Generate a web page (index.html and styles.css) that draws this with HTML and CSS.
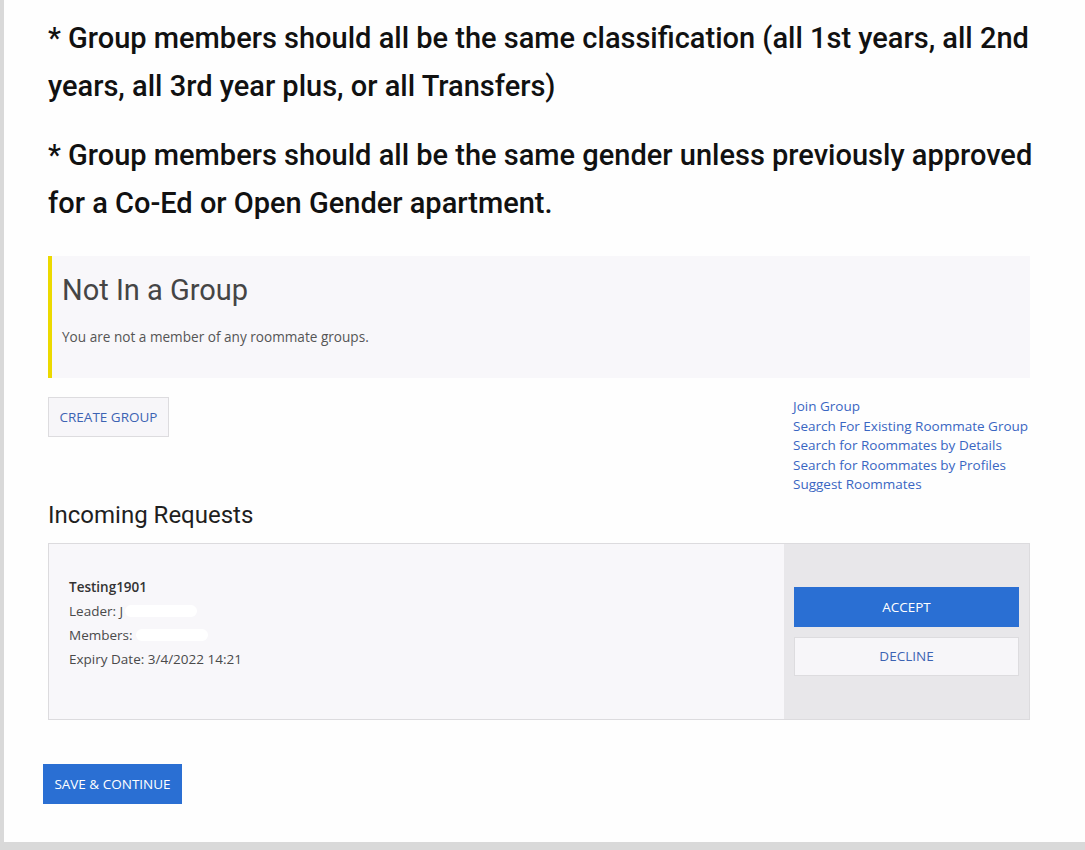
FILE: index.html
```html
<!DOCTYPE html>
<html>
<head>
<meta charset="utf-8">
<link rel="stylesheet" href="styles.css">
</head>
<body>
<div class="panel">
  <p class="note">* Group members should all be the same classification (all 1st years, all 2nd years, all 3rd year plus, or all Transfers)</p>
  <p class="note second">* Group members should all be the same gender unless previously approved for a Co-Ed or Open Gender apartment.</p>

  <div class="status">
    <h2 class="status-title">Not In a Group</h2>
    <p class="status-text">You are not a member of any roommate groups.</p>
  </div>

  <div class="actions">
    <button class="btn btn-light create">CREATE GROUP</button>
    <ul class="links">
      <li><a href="#">Join Group</a></li>
      <li><a href="#">Search For Existing Roommate Group</a></li>
      <li><a href="#">Search for Roommates by Details</a></li>
      <li><a href="#">Search for Roommates by Profiles</a></li>
      <li><a href="#">Suggest Roommates</a></li>
    </ul>
  </div>

  <h3 class="section-title">Incoming Requests</h3>

  <div class="request">
    <div class="request-info">
      <div class="req-name">Testing1901</div>
      <div class="req-line">Leader: J<span class="redact r1"></span></div>
      <div class="req-line">Members: <span class="redact r2"></span></div>
      <div class="req-line">Expiry Date: 3/4/2022 14:21</div>
    </div>
    <div class="request-actions">
      <button class="btn btn-primary">ACCEPT</button>
      <button class="btn btn-light">DECLINE</button>
    </div>
  </div>

  <button class="btn btn-primary save">SAVE &amp; CONTINUE</button>
</div>
</body>
</html>
```

FILE: styles.css
```css
html, body {
  margin: 0;
  padding: 0;
}
body {
  background: #d9d9d9;
  width: 1085px;
  height: 850px;
  overflow: hidden;
}
.panel {
  margin-left: 4px;
  width: 1025px;
  height: 842px;
  background: #fefefe;
  padding: 0 44px 0 44px;
  box-sizing: content-box;
  overflow: hidden;
}
.note {
  font-family: Roboto, "Liberation Sans", sans-serif;
  font-weight: 500;
  font-size: 29px;
  line-height: 48px;
  color: #111;
  margin: 14px 0 0 0;
}
.note.second {
  margin-top: 21px;
}
.status {
  margin-top: 29px;
  width: 982px;
  box-sizing: border-box;
  height: 122px;
  background: #f8f7fa;
  border-left: 4px solid #ecd900;
  padding: 17px 10px 0 10px;
}
.status-title {
  margin: 0;
  font-family: Roboto, "Liberation Sans", sans-serif;
  font-weight: 400;
  font-size: 29px;
  line-height: 34px;
  color: #454545;
}
.status-text {
  margin: 20px 0 0 0;
  font-family: "Open Sans", "Liberation Sans", sans-serif;
  font-size: 13.6px;
  line-height: 20px;
  color: #555;
}
.actions {
  display: flex;
  justify-content: space-between;
  align-items: flex-start;
  width: 982px;
  margin-top: 19px;
}
.btn {
  font-family: "Open Sans", "Liberation Sans", sans-serif;
  font-size: 13.5px;
  border: 1px solid transparent;
  cursor: pointer;
  padding: 0;
  box-sizing: border-box;
}
.btn-light {
  background: #f7f6f9;
  border-color: #dddcdf;
  color: #3d63b3;
}
.btn-primary {
  background: #2a6fd3;
  border-color: #2a6fd3;
  color: #fff;
}
.create {
  width: 121px;
  height: 40px;
}
.links {
  list-style: none;
  margin: 0;
  padding: 0;
  width: 237px;
  font-family: "Open Sans", "Liberation Sans", sans-serif;
  font-size: 13.5px;
  line-height: 19.5px;
}
.links a {
  color: #3a66c2;
  text-decoration: none;
  white-space: nowrap;
}
.section-title {
  margin: 5px 0 0 0;
  font-family: Roboto, "Liberation Sans", sans-serif;
  font-weight: 400;
  font-size: 24px;
  line-height: 30px;
  color: #1f1f1f;
}
.request {
  margin-top: 13px;
  width: 982px;
  height: 177px;
  box-sizing: border-box;
  border: 1px solid #dcdbde;
  display: flex;
  background: #f8f7fa;
}
.request-info {
  flex: 1;
  padding: 31px 20px 0 20px;
  font-family: "Open Sans", "Liberation Sans", sans-serif;
  font-size: 13.5px;
  line-height: 24px;
  color: #4a4a4a;
}
.req-name {
  font-weight: 600;
  color: #333;
}
.redact {
  display: inline-block;
  height: 12px;
  background: #fff;
  border-radius: 6px;
  vertical-align: -1px;
}
.r1 { width: 72px; margin-left: 2px; }
.r2 { width: 72px; }
.request-actions {
  width: 245px;
  box-sizing: border-box;
  background: #e8e7ea;
  padding: 0 10px;
  display: flex;
  flex-direction: column;
  justify-content: center;
  gap: 10px;
}
.request-actions .btn {
  width: 225px;
  height: 40px;
}
.request-actions .btn-light {
  height: 39px;
  border-color: #dddcdf;
}
.save {
  margin: 44px 0 0 -5px;
  width: 139px;
  height: 40px;
  display: block;
}
```
